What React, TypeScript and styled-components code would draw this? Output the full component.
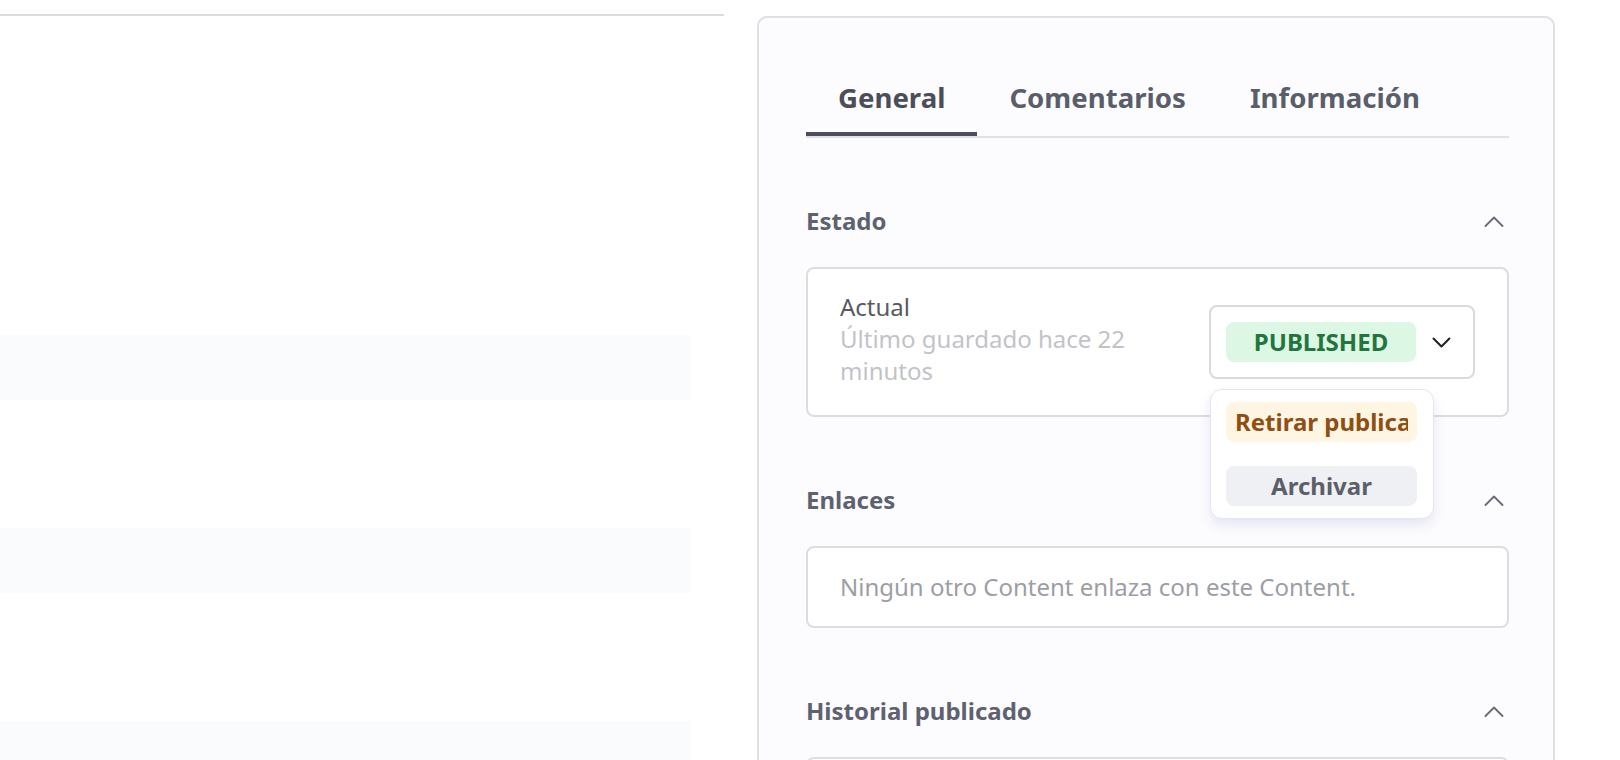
import React from 'react';
import styled, { createGlobalStyle } from 'styled-components';

const GlobalStyle = createGlobalStyle`
  html,
  body {
    margin: 0;
    padding: 0;
    background: #ffffff;
  }
  body {
    font-family: "Noto Sans", "Open Sans", sans-serif;
    overflow: hidden;
  }
`;

const Page = styled.div`
  display: flex;
  align-items: flex-start;
  width: 1620px;
  height: 760px;
  overflow: hidden;
`;

/**
 * Editor column (left)
 */

const EditorColumn = styled.div`
  flex-shrink: 0;
  width: 724px;
`;

const EditorTopBar = styled.div`
  height: 14px;
  border-bottom: 2px solid #dcdcdf;
`;

const FieldList = styled.div`
  display: flex;
  flex-direction: column;
  gap: 128px;
  padding-top: 319px;
`;

const FieldBand = styled.div`
  width: 691px;
  height: 65px;
  background: #fafbfd;
`;

/**
 * Side panel (right)
 */

const SidePanel = styled.aside`
  flex-shrink: 0;
  box-sizing: border-box;
  width: 798px;
  min-height: 800px;
  margin: 16px 0 0 33px;
  padding: 46px 44px 0 47px;
  border: 2px solid #dfdfe3;
  border-radius: 10px;
  background: #fcfcfe;
`;

const TabList = styled.div`
  display: flex;
  border-bottom: 2px solid #e1e1e5;
`;

const Tab = styled.div<{ $active?: boolean }>`
  height: 68px;
  box-sizing: content-box;
  padding: 0 32px;
  font-size: 27.6px;
  line-height: 66px;
  font-weight: 700;
  color: ${p => (p.$active ? '#4b4e59' : '#5a5e6a')};
  border-bottom: 4px solid ${p => (p.$active ? '#4b4e5c' : 'transparent')};
  white-space: nowrap;
`;

const Section = styled.section`
  margin-top: 67px;
`;

const SectionHeader = styled.div`
  display: flex;
  align-items: center;
  justify-content: space-between;
  height: 32px;
  margin-bottom: 30px;
`;

const SectionTitle = styled.h3`
  margin: 0;
  font-size: 24px;
  line-height: 32px;
  font-weight: 700;
  color: #5e6270;
`;

const Card = styled.div`
  box-sizing: border-box;
  border: 2px solid #dcdde1;
  border-radius: 8px;
  background: #ffffff;
`;

const StatusCard = styled(Card)`
  display: flex;
  align-items: flex-start;
  gap: 8px;
  padding: 22px 32px 28px;
`;

const StatusText = styled.div`
  flex: 1;
  min-width: 0;
`;

const Label = styled.div`
  font-size: 24px;
  line-height: 32px;
  color: #565a63;
`;

const Meta = styled.div`
  font-size: 24px;
  line-height: 32px;
  color: #c2c3c8;
`;

const SelectWrap = styled.div`
  position: relative;
  flex-shrink: 0;
  margin-top: 14px;
`;

const Select = styled.div`
  display: flex;
  align-items: center;
  gap: 16px;
  box-sizing: border-box;
  width: 266px;
  height: 74px;
  padding: 15px 22px 15px 15px;
  border: 2px solid #d9dade;
  border-radius: 8px;
  background: #ffffff;
`;

const StatusBadge = styled.span`
  display: block;
  width: 191px;
  height: 40px;
  border-radius: 8px;
  background: #dcf8e4;
  color: #22753d;
  font-size: 24px;
  line-height: 40px;
  font-weight: 700;
  text-align: center;
`;

const Menu = styled.div`
  position: absolute;
  top: calc(100% + 10px);
  left: 1px;
  z-index: 2;
  display: flex;
  flex-direction: column;
  gap: 24px;
  box-sizing: border-box;
  width: 224px;
  padding: 12px 15px;
  border: 1px solid #e4e5f6;
  border-radius: 12px;
  background: #ffffff;
  box-shadow: 0 6px 12px rgba(96, 96, 170, 0.14);
`;

const MenuItem = styled.div<{ $tone: 'warn' | 'muted' }>`
  box-sizing: border-box;
  width: 191px;
  height: 40px;
  padding: 0 9px;
  border-radius: 8px;
  background: ${p => (p.$tone === 'warn' ? '#fef5e2' : '#eff0f3')};
  color: ${p => (p.$tone === 'warn' ? '#8d4f14' : '#5b5f6a')};
  font-size: 24px;
  line-height: 40px;
  font-weight: 700;
  text-align: center;
`;

const MenuLabel = styled.span`
  display: block;
  overflow: hidden;
  white-space: nowrap;
`;

const LinksCard = styled(Card)`
  padding: 23px 32px;
  font-size: 24px;
  line-height: 32px;
  color: #9c9ea5;
`;

const ChevronUp = () => (
  <svg width="20" height="11" viewBox="0 0 20 11" fill="none" style={{ marginRight: 5 }}>
    <path d="M1.5 10 L10 1.5 L18.5 10" stroke="#666a75" strokeWidth="1.8" strokeLinecap="round" strokeLinejoin="round" />
  </svg>
);

const ChevronDown = () => (
  <svg width="19" height="11" viewBox="0 0 19 11" fill="none">
    <path d="M1.5 1.5 L9.5 9.5 L17.5 1.5" stroke="#1f1f24" strokeWidth="2" strokeLinecap="round" strokeLinejoin="round" />
  </svg>
);

export default function App() {
  return (
    <Page>
      <GlobalStyle />
      <EditorColumn>
        <EditorTopBar />
        <FieldList>
          <FieldBand />
          <FieldBand />
          <FieldBand />
        </FieldList>
      </EditorColumn>

      <SidePanel>
        <TabList>
          <Tab $active>General</Tab>
          <Tab>Comentarios</Tab>
          <Tab>Información</Tab>
        </TabList>

        <Section>
          <SectionHeader>
            <SectionTitle>Estado</SectionTitle>
            <ChevronUp />
          </SectionHeader>
          <StatusCard>
            <StatusText>
              <Label>Actual</Label>
              <Meta>Último guardado hace 22 minutos</Meta>
            </StatusText>
            <SelectWrap>
              <Select>
                <StatusBadge>PUBLISHED</StatusBadge>
                <ChevronDown />
              </Select>
              <Menu>
                <MenuItem $tone="warn">
                  <MenuLabel>Retirar publicación</MenuLabel>
                </MenuItem>
                <MenuItem $tone="muted">
                  <MenuLabel>Archivar</MenuLabel>
                </MenuItem>
              </Menu>
            </SelectWrap>
          </StatusCard>
        </Section>

        <Section>
          <SectionHeader>
            <SectionTitle>Enlaces</SectionTitle>
            <ChevronUp />
          </SectionHeader>
          <LinksCard>Ningún otro Content enlaza con este Content.</LinksCard>
        </Section>

        <Section>
          <SectionHeader>
            <SectionTitle>Historial publicado</SectionTitle>
            <ChevronUp />
          </SectionHeader>
          <LinksCard>&nbsp;</LinksCard>
        </Section>
      </SidePanel>
    </Page>
  );
}
